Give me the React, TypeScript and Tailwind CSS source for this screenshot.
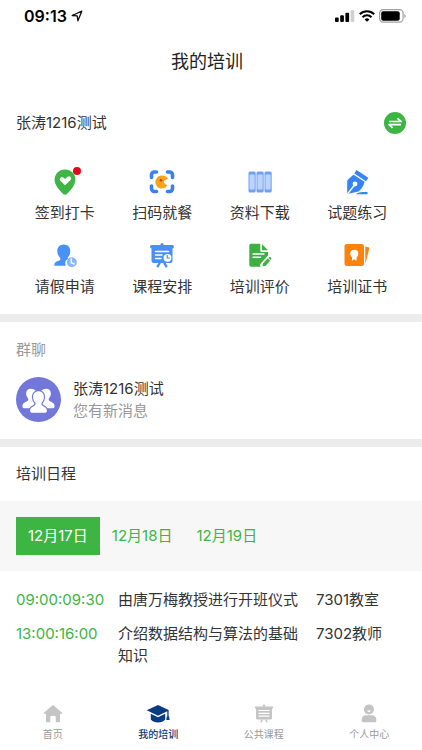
import { useState } from "react";
import type { ReactNode } from "react";

const CheckInIcon = () => (
  <svg viewBox="0 0 28 28" className="size-7" aria-hidden="true">
    <path d="M14 1.5C7.9 1.5 3.6 6 3.6 11.6c0 6.300 5.600 11.600 8.500 14.300 1.200 1.100 2.600 1.100 3.800 0 2.900-2.700 8.500-8 8.500-14.300C24.400 6 20.100 1.500 14 1.500z" fill="#3fb545" />
    <path d="M14 17.300l-4.700-4.600a2.200 2.200 0 0 1 3.100-3.100l1.600 1.500 2.500-2.300a2.200 2.200 0 0 1 3.100 3.100z" fill="#fff" />
  </svg>
);

const ScanIcon = () => (
  <svg viewBox="0 0 28 28" className="size-7" aria-hidden="true">
    <g fill="none" stroke="#3a80ee" strokeWidth="3.600" strokeLinecap="round">
      <path d="M3.500 9.500V7a3 3 0 0 1 3-3h2M19.500 4h2a3 3 0 0 1 3 3v2.500M24.500 18v2.500a3 3 0 0 1-3 3h-2M8.500 23.500h-2a3 3 0 0 1-3-3V18" />
    </g>
    <path d="M14.500 7.600c2.200 0 4 .9 5.200 2.400.5.600.2 1.100-.5 1.300-2.200.7-3.200 1.500-3.200 2.700s1 2 2.600 2.700c.7.300.8.900.3 1.400a6.500 6.500 0 1 1-4.400-10.500z" fill="#f3a51e" />
    <circle cx="13" cy="12.300" r="1.300" fill="#d8322a" />
  </svg>
);

const FilesIcon = () => (
  <svg viewBox="0 0 28 28" className="size-7" aria-hidden="true">
    {[2.5, 10.5, 18.5].map((x) => (
      <g key={x}>
        <rect x={x} y="3.500" width="7.200" height="21" rx="1.500" fill="#6ea2f3" />
        <rect x={x + 1} y="6.500" width="5.200" height="15" rx="1" fill="#bcd3fd" />
      </g>
    ))}
  </svg>
);

const PenIcon = () => (
  <svg viewBox="0 0 28 28" className="size-7" aria-hidden="true">
    <g fill="#3583f5">
      <path d="M13.500 2L25.300 9.800 23 13.300 11.300 5.500z" />
      <path d="M10.700 6.700L21.500 13.800C20.700 17.800 18.500 21.300 15.500 23.500L4.200 26V12.800C6 10.300 8.300 8.400 10.700 6.700z" />
      <path d="M12.500 26.300c3-2 5-2.600 12-2.300v2.300z" />
    </g>
    <path d="M4.500 26L11.500 17" stroke="#fff" strokeWidth="1.400" />
    <circle cx="12" cy="16" r="2.400" fill="#fff" />
  </svg>
);

const LeaveIcon = () => (
  <svg viewBox="0 0 28 28" className="size-7" aria-hidden="true">
    <path d="M12.800 2.500c-4 0-6.500 2.800-6.500 6.500 0 3 1.300 5.400 3 6.900.5 1.300-.2 2.300-1.600 2.800l-2.600 1C3.700 20.300 3.300 22 3.300 23.700h11.500a6 6 0 0 1 2.400-7.300l-.6-.8c1.600-1.500 2.700-3.800 2.700-6.600 0-3.700-2.500-6.500-6.500-6.500z" fill="#4791f7" />
    <circle cx="20.800" cy="20.300" r="5" fill="#8ab7fa" />
    <path d="M20.300 17v3.700l2.800 1.300" fill="none" stroke="#fff" strokeWidth="1.400" strokeLinecap="round" />
  </svg>
);

const ScheduleIcon = () => (
  <svg viewBox="0 0 28 28" className="size-7" aria-hidden="true">
    <g fill="#4a90f3">
      <rect x="12.500" y="1" width="3" height="4" rx="1.500" />
      <rect x="2" y="3" width="24" height="3.500" rx="1.700" />
      <path d="M3.500 5.500h21V19a2 2 0 0 1-2 2h-17a2 2 0 0 1-2-2z" />
    </g>
    <path d="M11.700 21l-2 3.300M16.300 21l2 3.300" stroke="#4a90f3" strokeWidth="2.400" strokeLinecap="round" />
    <path d="M7.500 9.500h13M7.500 13h6.500M7.500 16.500h5.500" stroke="#fff" strokeWidth="1.500" strokeLinecap="round" />
    <circle cx="19.500" cy="15.800" r="3.900" fill="#fff" />
    <path d="M19.300 13.500v2.500h2.200" fill="none" stroke="#4a90f3" strokeWidth="1.200" strokeLinecap="round" />
  </svg>
);

const ReviewIcon = () => (
  <svg viewBox="0 0 28 28" className="size-7" aria-hidden="true">
    <path d="M5 1.700h9.300V8.500a1.500 1.500 0 0 0 1.500 1.500h6.200v5.200l-7.500 9.600H5a1.700 1.700 0 0 1-1.700-1.700V3.400A1.700 1.700 0 0 1 5 1.700z" fill="#3cb043" />
    <path d="M16 2.300l6 6h-6z" fill="#3cb043" />
    <path d="M7 12h11M7 15.300h7.500" stroke="#fff" strokeWidth="1.400" strokeLinecap="round" />
    <path d="M17.300 23.300l5.700-6.600" stroke="#fff" strokeWidth="6" strokeLinecap="round" />
    <path d="M16.500 24.300l.5-2.700 4.600-5 2.500 2.200-4.700 5.100zM22.300 15.900l.7-.7c1-.8 2.900.8 2.100 2l-.5.800z" fill="#3cb043" />
  </svg>
);

const CertificateIcon = () => (
  <svg viewBox="0 0 28 28" className="size-7" aria-hidden="true">
    <rect x="1.500" y="2" width="19.500" height="22" rx="2.500" fill="#fb820d" />
    <path d="M22.300 4.500l3 .7a1.200 1.200 0 0 1 .9 1.500l-3.900 15.500z" fill="#fb820d" />
    <circle cx="11.300" cy="11.700" r="4" fill="#fff" />
    <path d="M9 14.500h4.600v4.200l-2.300-1.500L9 18.700z" fill="#fff" />
  </svg>
);

const GroupIcon = () => (
  <svg viewBox="0 0 44 44" className="size-[45px] shrink-0" aria-hidden="true">
    <circle cx="22" cy="22" r="22" fill="#7277d9" />
    <g fill="#fff">
      <path d="M14.500 11.500c-2.800 0-4.600 1.900-4.600 4.700 0 2.200 1 3.700 2 4.700.4 1.600-.3 2.400-1.500 3.100-2 1-4.100 1.700-4.100 4.600 0 1.300.7 2 2 2H20V14c-1.400-1.600-3.200-2.500-5.500-2.500z" />
      <path d="M29.500 11.500c2.800 0 4.600 1.900 4.600 4.700 0 2.200-1 3.700-2 4.700-.4 1.600.3 2.400 1.500 3.100 2 1 4.100 1.700 4.100 4.600 0 1.300-.7 2-2 2H24V14c1.400-1.600 3.200-2.500 5.500-2.500z" />
      <path d="M22 14c-3.200 0-5.300 2.300-5.300 5.500 0 2.600 1 4.400 2.400 5.700.3 1.800-.4 2.600-1.400 3.200-1.900 1.200-3.900 1.800-3.900 4.600 0 1.400.8 2 2 2h12.400c1.200 0 2-.6 2-2 0-2.800-2-3.400-3.900-4.600-1-.6-1.700-1.400-1.400-3.200 1.400-1.300 2.400-3.100 2.400-5.700 0-3.200-2.100-5.500-5.300-5.500z" stroke="#7277d9" strokeWidth="2.400" paintOrder="stroke" />
    </g>
  </svg>
);

const HomeIcon = () => (
  <svg viewBox="0 0 20 20" className="size-5" fill="currentColor" aria-hidden="true">
    <path d="M9.300 1.500a1 1 0 0 1 1.400 0l8.400 7.300c.5.500.3 1-.3 1H17v7.400a1 1 0 0 1-1 1h-3.200v-5a1.500 1.500 0 0 0-1.500-1.500H8.700a1.500 1.500 0 0 0-1.500 1.500v5H4a1 1 0 0 1-1-1V9.800H1.200c-.6 0-.8-.5-.3-1z" />
  </svg>
);

const CapIcon = () => (
  <svg viewBox="0 0 24 20" className="h-5 w-6" fill="currentColor" aria-hidden="true">
    <path d="M12 1L.7 6.300 12 11.700l9.300-4.400v5.200h1.300V6.100z" />
    <path d="M4.800 9.800L12 13.200l7.200-3.400v5.700c-1.500 2-4.200 3-7.200 3s-5.700-1-7.200-3z" />
    <path d="M20.800 12.300h2.300l.5 3.700h-3.300z" />
  </svg>
);

const BoardIcon = () => (
  <svg viewBox="0 0 20 20" className="size-5" aria-hidden="true">
    <path d="M9 .5h2v2h8v2h-1V14a1.500 1.500 0 0 1-1.500 1.500h-13A1.500 1.500 0 0 1 2 14V4.500H1v-2h8z" fill="currentColor" />
    <path d="M8.500 15.500l-1.700 3M11.500 15.500l1.700 3" stroke="currentColor" strokeWidth="1.500" />
    <path d="M4.500 6.500h11M4.500 9.300h11M4.500 12.100h11" stroke="#fff" strokeWidth="1.200" />
  </svg>
);

const PersonIcon = () => (
  <svg viewBox="0 0 20 20" className="size-5" fill="currentColor" aria-hidden="true">
    <circle cx="10" cy="5.500" r="5" />
    <path d="M7 11.300h6a4.500 4.500 0 0 1 4.300 4.300v1.200c0 1-.6 1.500-1.500 1.500H4.200c-.9 0-1.500-.5-1.500-1.500v-1.200A4.500 4.500 0 0 1 7 11.300z" />
    <path d="M8.300 6.500h3.400a1.700 1.700 0 0 1-3.400 0z" fill="#fff" />
  </svg>
);

type Action = { label: string; icon: ReactNode; dot?: boolean };

const actions: Action[] = [
  { label: "签到打卡", icon: <CheckInIcon />, dot: true },
  { label: "扫码就餐", icon: <ScanIcon /> },
  { label: "资料下载", icon: <FilesIcon /> },
  { label: "试题练习", icon: <PenIcon /> },
  { label: "请假申请", icon: <LeaveIcon /> },
  { label: "课程安排", icon: <ScheduleIcon /> },
  { label: "培训评价", icon: <ReviewIcon /> },
  { label: "培训证书", icon: <CertificateIcon /> },
];

const days = ["12月17日", "12月18日", "12月19日"];

const lessons = [
  { time: "09:00:09:30", title: "由唐万梅教授进行开班仪式", room: "7301教室" },
  { time: "13:00:16:00", title: "介绍数据结构与算法的基础知识", room: "7302教师" },
];

const tabs = [
  { label: "首页", icon: <HomeIcon /> },
  { label: "我的培训", icon: <CapIcon />, active: true },
  { label: "公共课程", icon: <BoardIcon /> },
  { label: "个人中心", icon: <PersonIcon /> },
];

function StatusBar() {
  return (
    <div className="flex h-8 items-center justify-between pr-4 pl-6">
      <div className="flex items-center gap-1 text-base font-semibold text-black">
        <span>09:13</span>
        <svg viewBox="0 0 12 12" className="size-3" aria-hidden="true">
          <path d="M1.200 5.500L10.800 1.200 6.900 10.800 6.200 5.900z" fill="none" stroke="#111" strokeWidth="1.300" strokeLinejoin="round" />
        </svg>
      </div>
      <div className="flex items-center gap-1">
        <svg viewBox="0 0 20 12" className="h-3 w-5" aria-hidden="true">
          <rect x="0" y="7.500" width="3.700" height="4.500" rx="1" />
          <rect x="5.200" y="5.300" width="3.700" height="6.700" rx="1" />
          <rect x="10.400" y="2.800" width="3.700" height="9.200" rx="1" />
          <rect x="15.600" y="0" width="3.700" height="12" rx="1" fill="#d0d0d0" />
        </svg>
        <svg viewBox="0 0 16 12" className="h-3 w-4" aria-hidden="true">
          <g fill="none" stroke="#000" strokeWidth="2">
            <path d="M.8 4.300a10.300 10.300 0 0 1 14.400 0" />
            <path d="M3.500 7.200a6.400 6.400 0 0 1 9 0" />
          </g>
          <path d="M8 11.800L5.600 9.400a3.400 3.400 0 0 1 4.800 0z" />
        </svg>
        <svg viewBox="0 0 27 14" className="h-[14px] w-[27px]" aria-hidden="true">
          <rect x=".6" y=".6" width="23.500" height="12.600" rx="3.600" fill="none" stroke="#a3a3a3" strokeWidth="1.200" />
          <rect x="2.200" y="2.200" width="18.500" height="9.500" rx="2" />
          <path d="M25.300 5v4c.9-.3 1.400-1.100 1.400-2s-.5-1.700-1.400-2z" fill="#a3a3a3" />
        </svg>
      </div>
    </div>
  );
}

export default function App() {
  const [day, setDay] = useState(0);

  return (
    <div className="flex min-h-screen flex-col bg-white font-[Inter,'Noto_Sans_CJK_SC',sans-serif] text-[15px] leading-[22px] text-[#333]">
      <StatusBar />
      <header className="flex h-[60px] items-center justify-center pr-2">
        <h1 className="text-lg text-[#222]">我的培训</h1>
      </header>

      <main>
        <section className="px-4 pt-5 pb-4">
          <div className="flex items-center justify-between">
            <h2>张涛1216测试</h2>
            <button type="button" aria-label="切换" className="size-[22px] rounded-full bg-[#3db543]">
              <svg viewBox="0 0 22 22" className="size-full" aria-hidden="true">
                <path d="M5 9.500h12L13.500 6.300M17 12.700H5l3.500 3.200" fill="none" stroke="#fff" strokeWidth="1.700" strokeLinejoin="round" />
              </svg>
            </button>
          </div>

          <div className="mt-[34px] grid grid-cols-4 gap-y-[18px]">
            {actions.map((action) => (
              <button key={action.label} type="button" className="flex flex-col items-center gap-1.5">
                <span className="relative">
                  {action.icon}
                  {action.dot && <span className="absolute -top-px -right-0.5 size-2 rounded-full bg-[#e00b18]" />}
                </span>
                {action.label}
              </button>
            ))}
          </div>
        </section>

        <section className="border-t-8 border-[#ececec] px-4 py-[17px]">
          <h2 className="text-[#999]">群聊</h2>
          <a href="#chat" className="mt-4 flex items-center gap-3">
            <GroupIcon />
            <span className="flex flex-col">
              <span>张涛1216测试</span>
              <span className="text-[#999]">您有新消息</span>
            </span>
          </a>
        </section>

        <section className="border-t-8 border-[#ececec]">
          <h2 className="px-4 py-4">培训日程</h2>
          <div className="flex bg-[#f7f7f7] p-4">
            {days.map((label, i) => (
              <button
                key={label}
                type="button"
                onClick={() => setDay(i)}
                className={i === day ? "bg-[#3db543] px-3 py-2 text-white" : "px-3 py-2 text-[#3db543]"}
              >
                {label}
              </button>
            ))}
          </div>
          <table className="mt-3 w-full table-fixed text-left">
            <tbody>
              {lessons.map((lesson) => (
                <tr key={lesson.time} className="align-top">
                  <td className="w-[118px] py-1.5 pl-4 text-[#3db543]">{lesson.time}</td>
                  <td className="w-[198px] py-1.5 pr-3">{lesson.title}</td>
                  <td className="py-1.5">{lesson.room}</td>
                </tr>
              ))}
            </tbody>
          </table>
        </section>
      </main>

      <nav className="mt-auto grid grid-cols-4 pb-2 text-[10px] leading-4">
        {tabs.map((tab) => (
          <a
            key={tab.label}
            href="#"
            className={
              tab.active
                ? "flex flex-col items-center gap-0.5 font-medium text-[#0b3b82]"
                : "flex flex-col items-center gap-0.5 text-[#c4c4c4]"
            }
          >
            {tab.icon}
            <span className={tab.active ? "" : "text-[#999]"}>{tab.label}</span>
          </a>
        ))}
      </nav>
    </div>
  );
}
